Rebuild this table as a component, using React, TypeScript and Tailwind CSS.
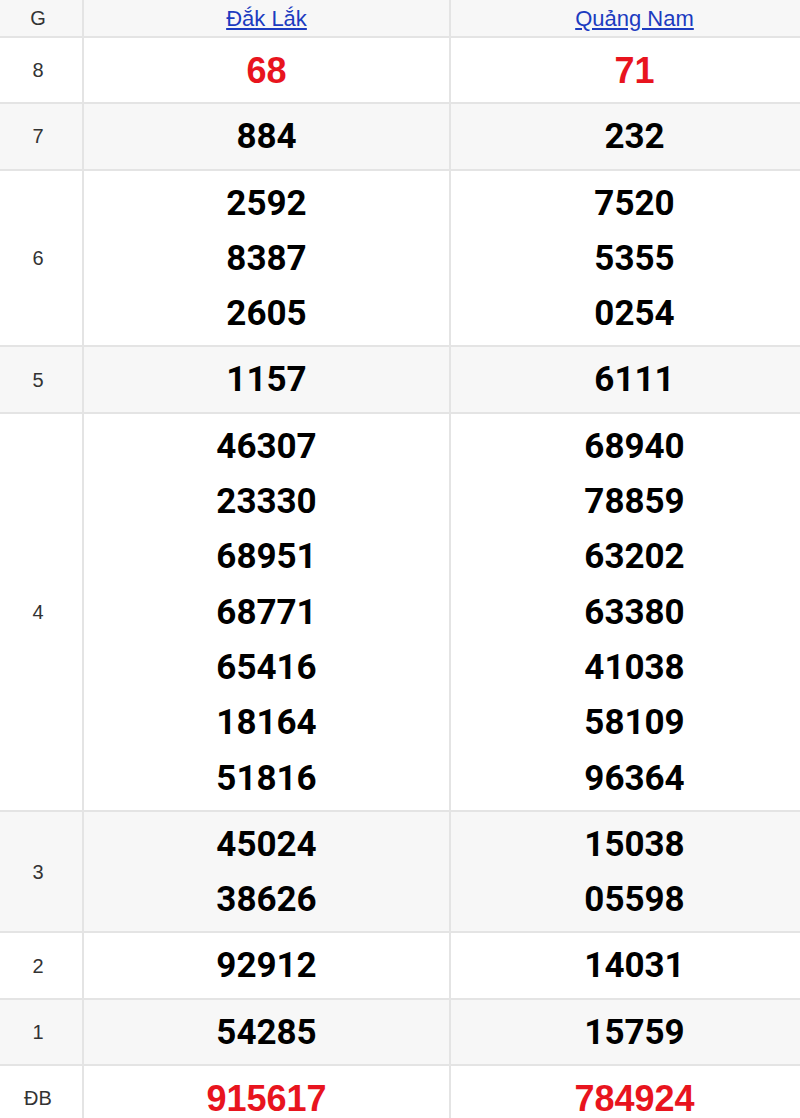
import React from "react";

type Row = { label: string; a: string[]; b: string[]; red?: boolean };

const rows: Row[] = [
  { label: "8", a: ["68"], b: ["71"], red: true },
  { label: "7", a: ["884"], b: ["232"] },
  { label: "6", a: ["2592", "8387", "2605"], b: ["7520", "5355", "0254"] },
  { label: "5", a: ["1157"], b: ["6111"] },
  {
    label: "4",
    a: ["46307", "23330", "68951", "68771", "65416", "18164", "51816"],
    b: ["68940", "78859", "63202", "63380", "41038", "58109", "96364"],
  },
  { label: "3", a: ["45024", "38626"], b: ["15038", "05598"] },
  { label: "2", a: ["92912"], b: ["14031"] },
  { label: "1", a: ["54285"], b: ["15759"] },
  { label: "ĐB", a: ["915617"], b: ["784924"], red: true },
];

function Nums({ list, red }: { list: string[]; red?: boolean }) {
  return (
    <div className="flex flex-col items-center justify-center border-b-2 border-[#e4e4e4] pt-[5px] pb-[4px]">
      {list.map((n) => (
        <div
          key={n}
          className={
            red
              ? "text-[36px] leading-[55.3px] font-bold text-[#e8141e] font-['Liberation_Sans',Arial,sans-serif]"
              : "text-[35px] leading-[55.3px] font-bold text-black font-['Roboto',Arial,sans-serif]"
          }
        >
          {n}
        </div>
      ))}
    </div>
  );
}

export default function App() {
  return (
    <div className="w-[800px] overflow-hidden bg-white font-['Liberation_Sans',Arial,sans-serif]">
      <div className="grid w-[818px] grid-cols-[84px_367px_367px] bg-[#f7f7f7]">
        <div className="h-[38px] flex items-center justify-center border-b-2 border-r-2 border-[#e4e4e4] pr-[6px] text-[20px] text-[#333]">
          G
        </div>
        <div className="h-[38px] flex items-center justify-center border-b-2 border-r-2 border-[#e4e4e4]">
          <a href="#" className="text-[22px] text-[#1c3bc0] underline">
            Đắk Lắk
          </a>
        </div>
        <div className="h-[38px] flex items-center justify-center border-b-2 border-[#e4e4e4]">
          <a href="#" className="text-[22px] text-[#1c3bc0] underline">
            Quảng Nam
          </a>
        </div>
      </div>
      {rows.map((r, i) => (
        <div
          key={r.label}
          className={
            i % 2 === 1
              ? "grid w-[818px] grid-cols-[84px_367px_367px] bg-[#f7f7f7]"
              : "grid w-[818px] grid-cols-[84px_367px_367px] bg-white"
          }
        >
          <div className="flex items-center justify-center border-b-2 border-r-2 border-[#e4e4e4] pr-[6px] text-[20px] text-[#333]">
            {r.label}
          </div>
          <div className="border-r-2 border-[#e4e4e4]">
            <Nums list={r.a} red={r.red} />
          </div>
          <Nums list={r.b} red={r.red} />
        </div>
      ))}
    </div>
  );
}
